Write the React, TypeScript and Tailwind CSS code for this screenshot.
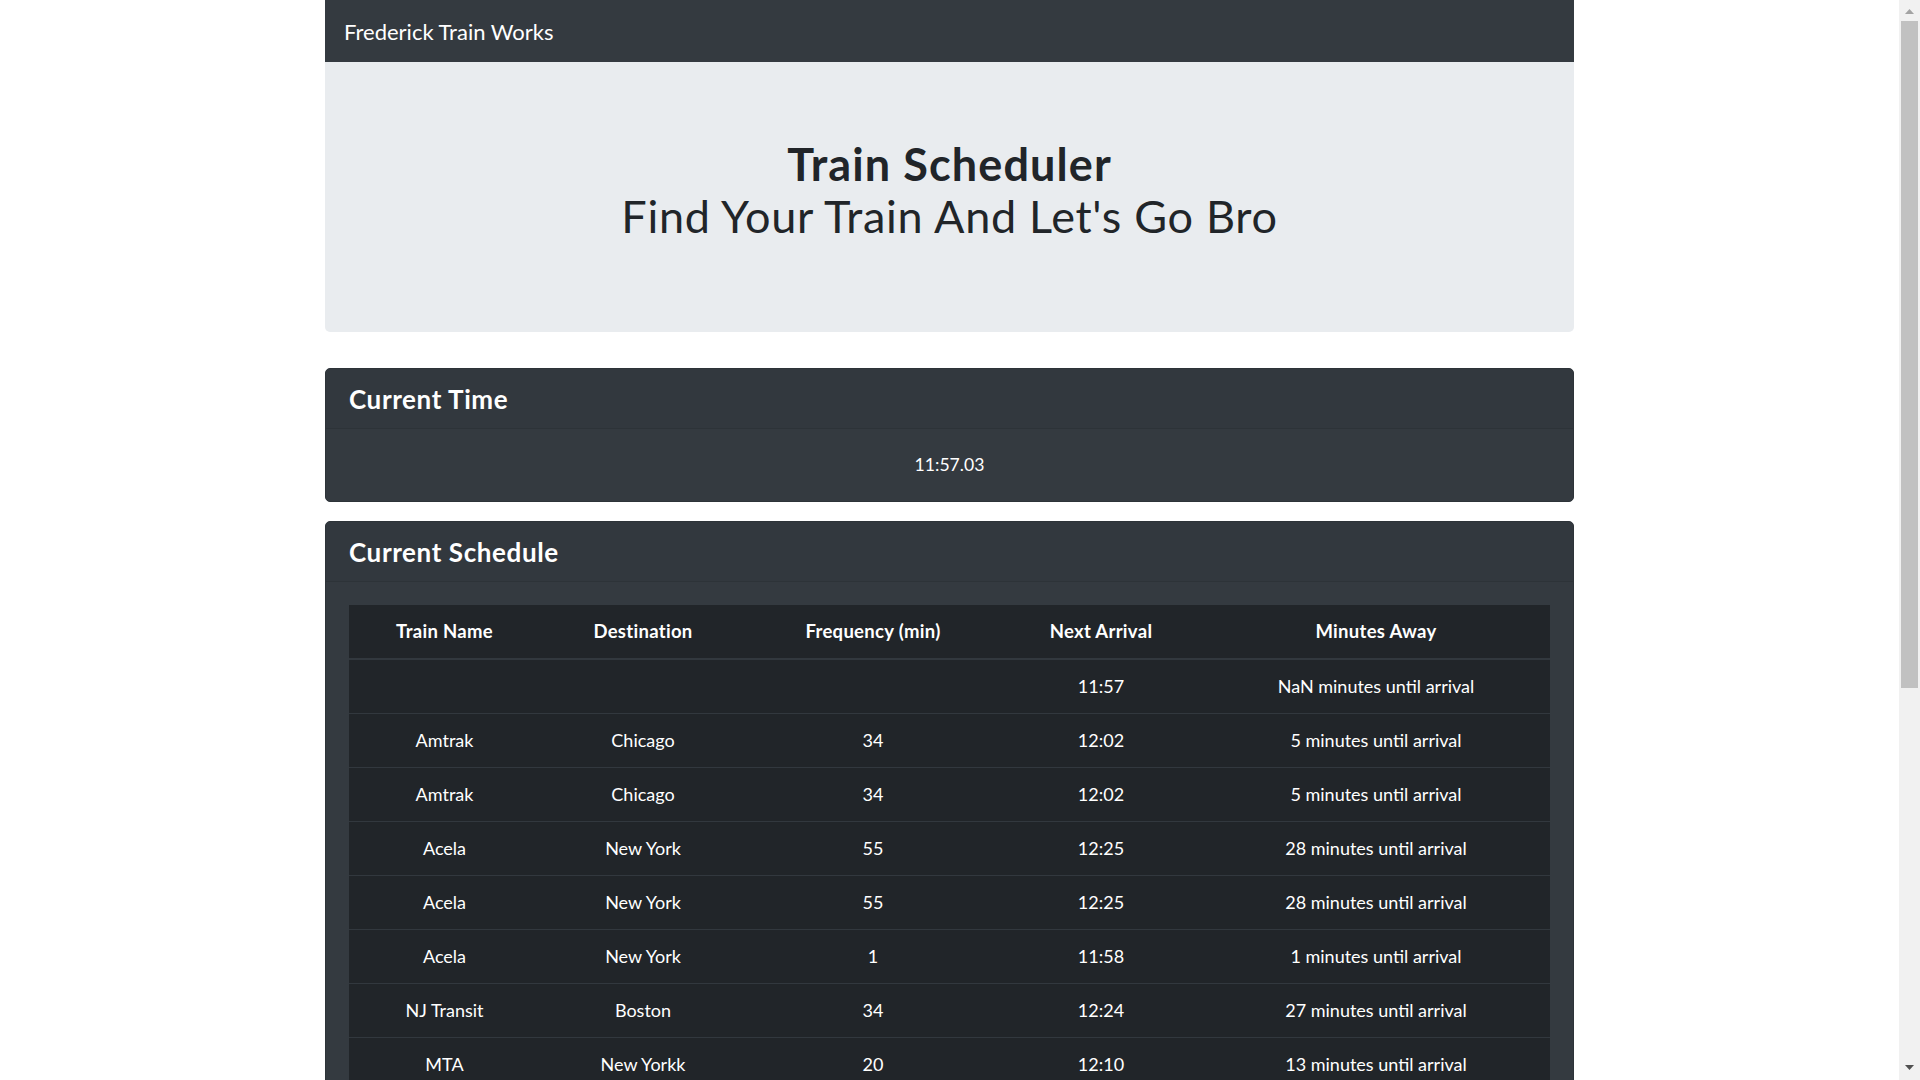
import * as React from 'react';

type Train = {
  name: string;
  destination: string;
  frequency: string;
  next: string;
  away: string;
};

const trains: Train[] = [
  { name: '', destination: '', frequency: '', next: '11:57', away: 'NaN minutes until arrival' },
  { name: 'Amtrak', destination: 'Chicago', frequency: '34', next: '12:02', away: '5 minutes until arrival' },
  { name: 'Amtrak', destination: 'Chicago', frequency: '34', next: '12:02', away: '5 minutes until arrival' },
  { name: 'Acela', destination: 'New York', frequency: '55', next: '12:25', away: '28 minutes until arrival' },
  { name: 'Acela', destination: 'New York', frequency: '55', next: '12:25', away: '28 minutes until arrival' },
  { name: 'Acela', destination: 'New York', frequency: '1', next: '11:58', away: '1 minutes until arrival' },
  { name: 'NJ Transit', destination: 'Boston', frequency: '34', next: '12:24', away: '27 minutes until arrival' },
  { name: 'MTA', destination: 'New Yorkk', frequency: '20', next: '12:10', away: '13 minutes until arrival' },
];

const cols = 'grid grid-cols-[191px_206px_254px_202px_348px]';

const Scrollbar = () => (
  <div className="w-[21px] shrink-0 h-full bg-[#f1f1f1] flex flex-col items-center">
    <svg width="9" height="5" viewBox="0 0 9 5" className="mt-[9px]">
      <polygon points="4.5,0 9,5 0,5" fill="#a3a3a3" />
    </svg>
    <div className="mt-[7px] w-[17px] h-[667px] bg-[#c1c1c1]" />
    <div className="flex-1" />
    <svg width="9" height="5" viewBox="0 0 9 5" className="mb-[10px]">
      <polygon points="0,0 9,0 4.5,5" fill="#505050" />
    </svg>
  </div>
);

const CardHeader = ({ title }: { title: string }) => (
  <div className="h-[60px] flex items-center px-[23px] bg-[#32383e] border-b border-[#2d3338] rounded-t-[4px]">
    <h3 className="text-[26px] font-bold leading-[32px] tracking-[0.6px] text-white">{title}</h3>
  </div>
);

export default function App() {
  return (
    <div className="flex h-screen overflow-hidden bg-white font-['Lato','Noto_Sans',sans-serif] text-[#212529]">
      <main className="flex-1 min-w-0 overflow-hidden">
        <div className="w-[1249px] mx-auto">
          <nav className="h-[62px] bg-[#343a40] flex items-center px-[19px]">
            <span className="text-[22px] text-white">Frederick Train Works</span>
          </nav>

          <header className="h-[270px] bg-[#e9ecef] rounded-b-[5px] flex flex-col items-center pt-[76px]">
            <h1 className="text-[45px] leading-[52px] font-bold tracking-[1.1px]">Train Scheduler</h1>
            <h1 className="text-[45px] leading-[52px] tracking-[0.7px]">Find Your Train And Let's Go Bro</h1>
          </header>

          <section className="mt-[36px] bg-[#343a40] border border-[#2d3338] rounded-[5px]">
            <CardHeader title="Current Time" />
            <div className="h-[72px] flex items-center justify-center text-[17.6px] text-white">11:57.03</div>
          </section>

          <section className="mt-[19px] bg-[#343a40] border border-[#2d3338] rounded-[5px]">
            <CardHeader title="Current Schedule" />
            <div className="px-[23px] pt-[23px] pb-[23px]">
              <div className="bg-[#212529] text-white text-[18px]">
                <div className={`${cols} h-[55px] border-b-2 border-[#32383e] font-bold text-[18.5px] tracking-[0.3px]`}>
                  <div className="flex items-center justify-center">Train Name</div>
                  <div className="flex items-center justify-center">Destination</div>
                  <div className="flex items-center justify-center">Frequency (min)</div>
                  <div className="flex items-center justify-center">Next Arrival</div>
                  <div className="flex items-center justify-center">Minutes Away</div>
                </div>
                {trains.map((t, i) => (
                  <div
                    key={i}
                    className={`${cols} ${i === 0 ? 'h-[53px]' : 'h-[54px] border-t border-[#32383e]'}`}
                  >
                    <div className="flex items-center justify-center">{t.name}</div>
                    <div className="flex items-center justify-center">{t.destination}</div>
                    <div className="flex items-center justify-center">{t.frequency}</div>
                    <div className="flex items-center justify-center">{t.next}</div>
                    <div className="flex items-center justify-center">{t.away}</div>
                  </div>
                ))}
              </div>
            </div>
          </section>
        </div>
      </main>
      <Scrollbar />
    </div>
  );
}
